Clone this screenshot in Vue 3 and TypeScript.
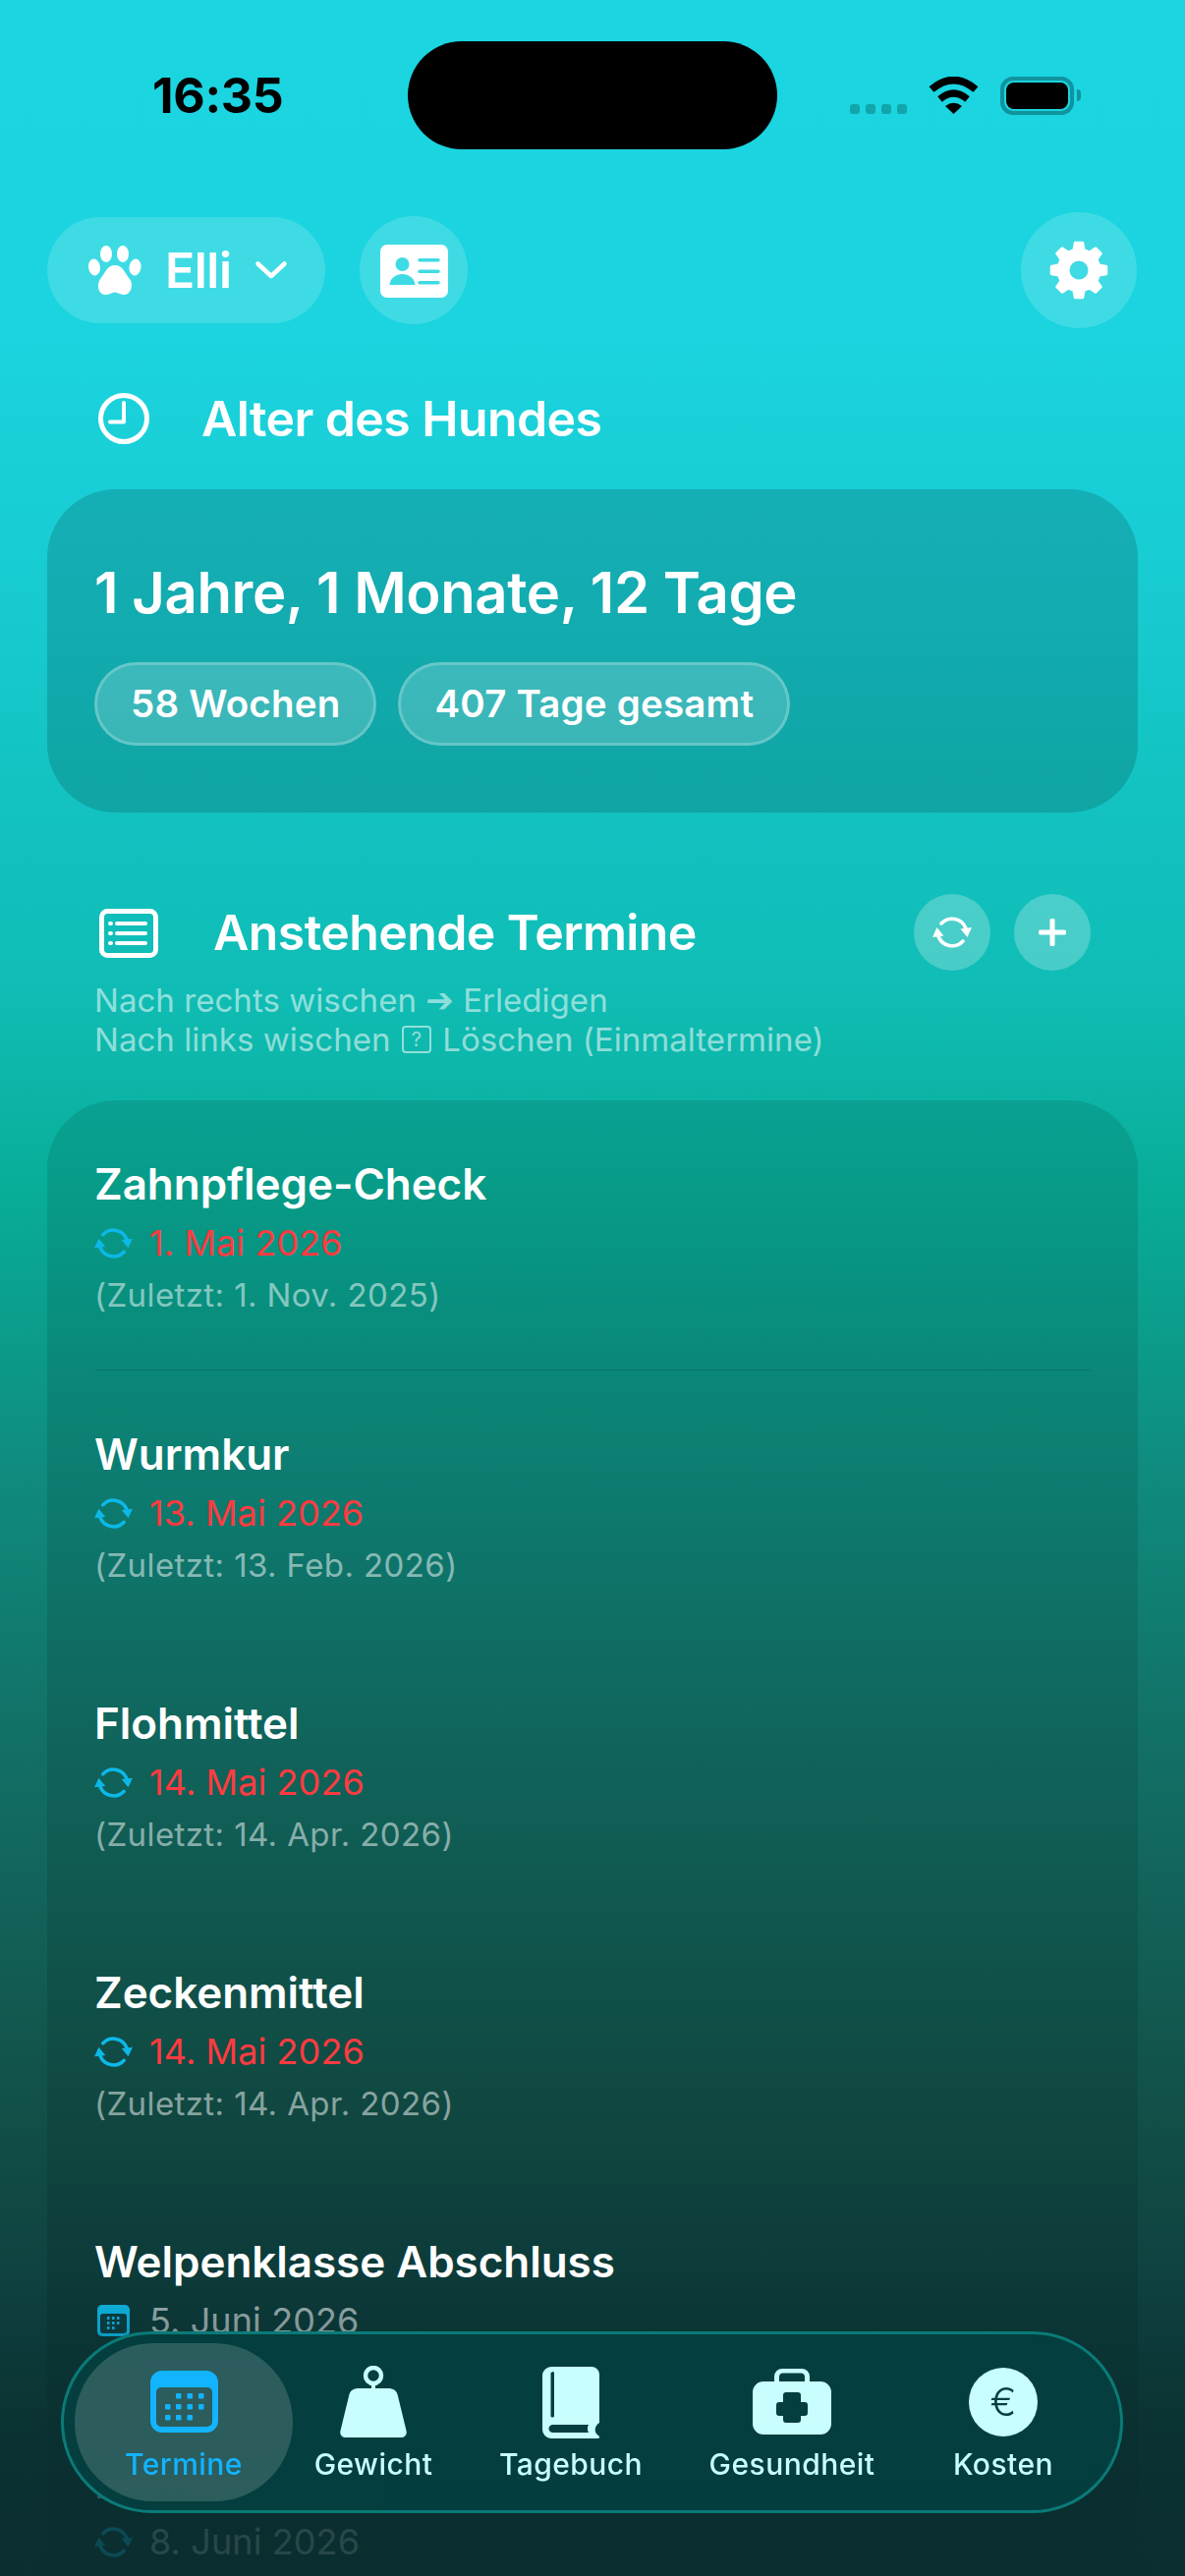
<script setup lang="ts">
interface Termin {
  title: string
  date: string
  last?: string
  kind: 'repeat' | 'calendar'
  overdue: boolean
}

const termine: Termin[] = [
  { title: 'Zahnpflege-Check', date: '1. Mai 2026', last: '(Zuletzt: 1. Nov. 2025)', kind: 'repeat', overdue: true },
  { title: 'Wurmkur', date: '13. Mai 2026', last: '(Zuletzt: 13. Feb. 2026)', kind: 'repeat', overdue: true },
  { title: 'Flohmittel', date: '14. Mai 2026', last: '(Zuletzt: 14. Apr. 2026)', kind: 'repeat', overdue: true },
  { title: 'Zeckenmittel', date: '14. Mai 2026', last: '(Zuletzt: 14. Apr. 2026)', kind: 'repeat', overdue: true },
  { title: 'Welpenklasse Abschluss', date: '5. Juni 2026', kind: 'calendar', overdue: false },
  { title: 'Hundesteuer', date: '8. Juni 2026', kind: 'repeat', overdue: false }
]

function gearPath(): string {
  const cx = 32
  const cy = 32
  const teeth = 8
  const pts: string[] = []
  for (let i = 0; i < teeth; i++) {
    const a = (i * Math.PI * 2) / teeth - Math.PI / 2
    const step = Math.PI / teeth
    const list: Array<[number, number]> = [
      [21, a - step * 0.62],
      [28, a - step * 0.34],
      [28, a + step * 0.34],
      [21, a + step * 0.62]
    ]
    for (const [r, t] of list) {
      pts.push(`${(cx + r * Math.cos(t)).toFixed(2)} ${(cy + r * Math.sin(t)).toFixed(2)}`)
    }
  }
  return `M${pts.join('L')}Z M${cx + 11} ${cy} a11 11 0 1 0 -22 0 a11 11 0 1 0 22 0Z`
}
const gear = gearPath()
</script>

<template>
  <div class="screen">
    <svg class="defs" aria-hidden="true">
      <symbol id="reload" viewBox="0 0 40 34">
        <path d="M9 8A15 15 0 0 1 34 13" fill="none" stroke="currentColor" stroke-width="3.6" stroke-linecap="round" />
        <path d="M31 26A15 15 0 0 1 6 21" fill="none" stroke="currentColor" stroke-width="3.6" stroke-linecap="round" />
        <path d="M28.5 13.5L40 12L35.5 22Z" fill="currentColor" />
        <path d="M11.5 20.5L0 22L4.5 12Z" fill="currentColor" />
      </symbol>
    </svg>

    <header class="status">
      <span class="time">16:35</span>
      <div class="status-right">
        <span class="signal"><i></i><i></i><i></i><i></i></span>
        <svg class="wifi" viewBox="0 0 51 38">
          <path d="M3 13Q25.500 -6 48 13" fill="none" stroke="#000" stroke-width="7.500" />
          <path d="M11.500 23Q25.500 11 39.500 23" fill="none" stroke="#000" stroke-width="7" />
          <path d="M17 30Q25.500 23.500 34 30L25.500 38Z" fill="#000" />
        </svg>
        <span class="battery"><i></i></span>
        <span class="nub"></span>
      </div>
    </header>
    <div class="island"></div>

    <div class="toprow">
      <button class="pill">
        <svg class="paw" viewBox="0 0 54 50" fill="#fff">
          <ellipse cx="6" cy="22" rx="6" ry="8.500" transform="rotate(-8 6 22)" />
          <ellipse cx="18" cy="8.500" rx="6" ry="8.500" />
          <ellipse cx="35" cy="8.500" rx="6" ry="8.500" />
          <ellipse cx="47.500" cy="22" rx="6" ry="8.500" transform="rotate(8 47.500 22)" />
          <path d="M27 20C35 20 37 28 42 34C46 39 44 50 36 50C32 50 30 47.500 27 47.500C24 47.500 22 50 17 50C10 50 8 40 12 34C17 28 19 20 27 20Z" />
        </svg>
        <span class="pet">Elli</span>
        <svg class="chev" viewBox="0 0 34 22"><path d="M3.500 4.500L17 17L30.500 4.500" fill="none" stroke="#fff" stroke-width="4.500" stroke-linecap="round" stroke-linejoin="round" /></svg>
      </button>
      <button class="round idb">
        <svg class="idcard" viewBox="0 0 69 54">
          <path fill="#fff" fill-rule="evenodd" d="M7 0H62a7 7 0 0 1 7 7V47a7 7 0 0 1-7 7H7a7 7 0 0 1-7-7V7a7 7 0 0 1 7-7Z M22.500 13a7 7 0 1 0 0 14a7 7 0 1 0 0-14Z M9.500 41C10 34 16 30 22.500 30C29 30 35 34 35.500 41Z M40 14a1.500 1.500 0 0 0 0 3.500H59a1.500 1.500 0 0 0 0-3.500Z M40 25.500a1.500 1.500 0 0 0 0 3.500H59a1.500 1.500 0 0 0 0-3.500Z M40 37a1.500 1.500 0 0 0 0 3.500H59a1.500 1.500 0 0 0 0-3.500Z" />
        </svg>
      </button>
      <button class="round gearb">
        <svg class="gear" viewBox="0 0 64 64">
          <path :d="gear" fill="#fff" fill-rule="evenodd" stroke="#fff" stroke-width="3" stroke-linejoin="round" />
        </svg>
      </button>
    </div>

    <div class="age-head">
      <svg class="clock" viewBox="0 0 52 52">
        <circle cx="26" cy="26" r="23.500" fill="none" stroke="#fff" stroke-width="5" />
        <path d="M26 10V29.500H12" fill="none" stroke="#fff" stroke-width="4" stroke-linecap="round" stroke-linejoin="round" />
      </svg>
      <h2>Alter des Hundes</h2>
    </div>

    <section class="age-card">
      <div class="age">1 Jahre, 1 Monate, 12 Tage</div>
      <div class="chips">
        <span class="chip">58 Wochen</span>
        <span class="chip">407 Tage gesamt</span>
      </div>
    </section>

    <div class="sec-head">
      <svg class="listicon" viewBox="0 0 60 50">
        <rect x="2.500" y="2.500" width="55" height="45" rx="6" fill="none" stroke="#fff" stroke-width="5" />
        <path d="M18 15H47M18 25H47M18 35H47" stroke="#fff" stroke-width="4" stroke-linecap="round" />
        <path d="M11 15H12M11 25H12M11 35H12" stroke="#fff" stroke-width="4" stroke-linecap="round" />
      </svg>
      <h2>Anstehende Termine</h2>
      <button class="mini">
        <svg class="mini-reload"><use href="#reload" /></svg>
      </button>
      <button class="mini">
        <svg class="plus" viewBox="0 0 28 28"><path d="M14 2V26M2 14H26" stroke="#fff" stroke-width="5" stroke-linecap="round" /></svg>
      </button>
    </div>
    <p class="hint">
      <span class="hline">Nach rechts wischen <span class="arrow">➔</span> Erledigen</span>
      <span class="hline">Nach links wischen <span class="qbox">?</span> Löschen (Einmaltermine)</span>
    </p>

    <section class="list">
      <article v-for="(t, i) in termine" :key="t.title" class="item" :class="{ first: i === 0 }">
        <h3>{{ t.title }}</h3>
        <div class="dateline">
          <svg v-if="t.kind === 'repeat'" class="rep"><use href="#reload" /></svg>
          <svg v-else class="cal" viewBox="0 0 33 32">
            <rect width="33" height="32" rx="5" fill="#0db8e8" />
            <rect x="3" y="9" width="27" height="20" rx="3" fill="#0a3d42" />
            <g fill="#0db8e8">
              <rect x="10" y="12" width="2.500" height="3" /><rect x="15" y="12" width="2.500" height="3" /><rect x="20" y="12" width="2.500" height="3" />
              <rect x="10" y="17" width="2.500" height="3" /><rect x="15" y="17" width="2.500" height="3" /><rect x="20" y="17" width="2.500" height="3" />
              <rect x="10" y="22" width="2.500" height="3" /><rect x="15" y="22" width="2.500" height="3" />
            </g>
          </svg>
          <span class="date" :class="{ overdue: t.overdue }">{{ t.date }}</span>
        </div>
        <div v-if="t.last" class="last">{{ t.last }}</div>
      </article>
    </section>

    <div class="fade"></div>

    <nav class="tabbar">
      <div class="tab active">
        <svg class="ic-cal" viewBox="0 0 69 63">
          <path fill="#12b4ff" fill-rule="evenodd" d="M12 0H57a12 12 0 0 1 12 12V51a12 12 0 0 1-12 12H12A12 12 0 0 1 0 51V12A12 12 0 0 1 12 0Z M11 17a5 5 0 0 0-5 5V52a5 5 0 0 0 5 5H58a5 5 0 0 0 5-5V22a5 5 0 0 0-5-5Z" />
          <g fill="#12b4ff">
            <rect x="26" y="23" width="5.500" height="5.500" rx="1" /><rect x="37.500" y="23" width="5.500" height="5.500" rx="1" /><rect x="49" y="23" width="5.500" height="5.500" rx="1" />
            <rect x="15" y="34" width="5.500" height="5.500" rx="1" /><rect x="26" y="34" width="5.500" height="5.500" rx="1" /><rect x="37.500" y="34" width="5.500" height="5.500" rx="1" /><rect x="49" y="34" width="5.500" height="5.500" rx="1" />
            <rect x="15" y="45" width="5.500" height="5.500" rx="1" /><rect x="26" y="45" width="5.500" height="5.500" rx="1" /><rect x="37.500" y="45" width="5.500" height="5.500" rx="1" />
          </g>
        </svg>
        <span>Termine</span>
      </div>
      <div class="tab">
        <svg class="ic-weight" viewBox="0 0 68 73">
          <circle cx="34" cy="10" r="8" fill="none" stroke="#c8fefe" stroke-width="4.500" />
          <path d="M34 18V24" stroke="#c8fefe" stroke-width="4" />
          <path fill="#c8fefe" d="M19 23H49C54 23 58 25 59 31L67.500 66C68.500 70 66 73 62 73H6C2 73 -0.500 70 0.500 66L9 31C10 25 14 23 19 23Z" />
        </svg>
        <span>Gewicht</span>
      </div>
      <div class="tab">
        <svg class="ic-book" viewBox="0 0 59 73">
          <path fill="#c8fefe" fill-rule="evenodd" d="M9 0H50a8 8 0 0 1 8 8V57C53 60 52 67 57 70C59 71.500 58 73 56 73H9a9 9 0 0 1-9-9V9a9 9 0 0 1 9-9Z M9.500 5.500A1.500 1.500 0 0 0 8.500 7V50A1.500 1.500 0 0 0 10 51.500A1.500 1.500 0 0 0 12 50V7A1.500 1.500 0 0 0 9.500 5.500Z M11 59C5 59 5 67 11 67H47C45.500 64.500 45.500 61.500 47 59Z" />
        </svg>
        <span>Tagebuch</span>
      </div>
      <div class="tab">
        <svg class="ic-med" viewBox="0 0 80 67">
          <path fill="#c8fefe" fill-rule="evenodd" d="M30 0H50a8 8 0 0 1 8 8V13H69a11 11 0 0 1 11 11V56a11 11 0 0 1-11 11H11A11 11 0 0 1 0 56V24a11 11 0 0 1 11-11H22V8a8 8 0 0 1 8-8Z M31 4.500a4 4 0 0 0-4 4V13H53V8.500a4 4 0 0 0-4-4Z M34 24a3 3 0 0 0-3 3V34H27a3 3 0 0 0-3 3V45a3 3 0 0 0 3 3H31V52a3 3 0 0 0 3 3H46a3 3 0 0 0 3-3V48H53a3 3 0 0 0 3-3V37a3 3 0 0 0-3-3H49V27a3 3 0 0 0-3-3Z" />
        </svg>
        <span>Gesundheit</span>
      </div>
      <div class="tab">
        <span class="euro">€</span>
        <span>Kosten</span>
      </div>
    </nav>
  </div>
</template>

<style scoped>
.screen {
  position: relative;
  width: 1206px;
  height: 2622px;
  overflow: hidden;
  font-family: Inter, "Liberation Sans", sans-serif;
  color: #fff;
  background: linear-gradient(180deg, #1bd5e1 0, #1bd4df 330px, #17cbd1 600px, #13c3c2 800px, #10bdb6 1000px, #08ad97 1215px, #0f8b7e 1500px, #127268 1750px, #125048 2150px, #0e3f3f 2350px, #0b2f30 2622px);
}
.defs { position: absolute; width: 0; height: 0; }
button { border: 0; padding: 0; margin: 0; color: inherit; font: inherit; }

.status { height: 216px; flex: none; display: flex; justify-content: space-between; padding: 69px 0 0 155px; box-sizing: border-box; }
.time { font-size: 50px; font-weight: 700; color: #000; line-height: 56px; height: 56px; letter-spacing: -0.3px; }
.status-right { display: flex; align-items: flex-start; padding: 9px 106px 0 0; }
.signal { display: flex; gap: 6px; margin: 28px 22px 0 0; }
.signal i { width: 10px; height: 10px; border-radius: 3px; background: #12a5ac; }
.wifi { width: 51px; height: 38px; margin-right: 22px; }
.battery { width: 75px; height: 39px; box-sizing: border-box; border: 4px solid #0f949e; border-radius: 13px; padding: 2px; display: flex; }
.battery i { flex: 1; background: #000; border-radius: 8px; }
.nub { width: 4px; height: 12px; margin: 13px 0 0 3px; background: #0f949e; border-radius: 0 6px 6px 0; }
.island { position: absolute; left: 415px; top: 42px; width: 376px; height: 110px; background: #000; border-radius: 55px; }

.toprow { display: flex; align-items: center; height: 118px; padding: 0 49px 0 48px; }
.pill { width: 283px; height: 108px; border-radius: 54px; background: rgba(255, 255, 255, 0.16); display: flex; align-items: center; padding-left: 42px; box-sizing: border-box; }
.paw { width: 54px; height: 50px; margin-right: 24px; }
.pet { font-size: 50px; font-weight: 600; line-height: 1; letter-spacing: -0.5px; }
.chev { width: 34px; height: 22px; margin-left: 23px; }
.round { border-radius: 50%; background: rgba(255, 255, 255, 0.16); display: flex; align-items: center; justify-content: center; }
.idb { width: 110px; height: 110px; margin-left: 35px; }
.idcard { width: 69px; height: 54px; margin-top: 2px; }
.gearb { width: 118px; height: 118px; margin-left: auto; }
.gear { width: 64px; height: 64px; }

.age-head { display: flex; align-items: center; height: 52px; margin-top: 66px; padding-left: 100px; }
.clock { width: 52px; height: 52px; margin-right: 53px; }
h2 { margin: 0; font-size: 50px; font-weight: 600; line-height: 60px; letter-spacing: -0.6px; }

.age-card { margin: 46px 48px 0; height: 329px; box-sizing: border-box; border-radius: 70px; padding: 70px 48px 0; background: rgba(0, 0, 0, 0.15); }
.age { font-size: 58px; font-weight: 600; line-height: 70px; letter-spacing: -0.4px; }
.chips { display: flex; gap: 22px; margin-top: 36px; }
.chip { height: 85px; box-sizing: border-box; border: 3px solid rgba(255, 255, 255, 0.22); border-radius: 43px; background: rgba(255, 255, 255, 0.18); font-size: 38.5px; font-weight: 600; line-height: 79px; padding: 0 34px; letter-spacing: 0.2px; }

.sec-head { display: flex; align-items: center; height: 78px; margin-top: 83px; padding: 0 96px 0 101px; }
.listicon { width: 60px; height: 50px; margin: 2px 56px 0 0; }
.sec-head h2 { flex: 1; }
.mini { width: 78px; height: 78px; border-radius: 50%; background: rgba(255, 255, 255, 0.24); display: flex; align-items: center; justify-content: center; margin-left: 24px; }
.mini-reload { width: 40px; height: 34px; color: #fff; }
.plus { width: 28px; height: 28px; }

.hint { margin: 10px 0 0; padding-left: 96px; font-size: 33px; line-height: 40px; color: rgba(255, 255, 255, 0.55); letter-spacing: 0.04px; }
.hline { display: block; height: 40px; white-space: nowrap; }
.arrow { font-family: "DejaVu Sans", sans-serif; font-size: 34px; line-height: 1; }
.qbox { display: inline-block; width: 30px; height: 28px; box-sizing: border-box; border: 2px solid rgba(255, 255, 255, 0.55); border-radius: 4px; font-size: 20px; line-height: 24px; text-align: center; vertical-align: 5px; margin: 0 2px; }

.list { margin: 42px 48px 0; height: 1600px; box-sizing: border-box; padding: 60px 48px 0; border-radius: 70px 70px 0 0; background: rgba(0, 0, 0, 0.1); }
.item { padding-bottom: 53px; margin-bottom: 60px; }
.item.first { border-bottom: 1px solid rgba(0, 60, 60, 0.25); }
h3 { margin: 0; font-size: 44px; font-weight: 600; line-height: 50px; letter-spacing: -0.05px; }
.dateline { display: flex; align-items: center; height: 54px; margin-top: 8px; }
.rep { width: 39px; height: 33px; margin-right: 17px; color: #0db8e8; }
.cal { width: 33px; height: 32px; margin: 0 20px 0 3px; }
.date { font-size: 36px; line-height: 54px; color: rgba(255, 255, 255, 0.6); letter-spacing: 0.1px; }
.date.overdue { color: #ff3b40; }
.last { font-size: 33px; line-height: 46px; margin-top: 3px; color: rgba(255, 255, 255, 0.5); letter-spacing: 0.4px; }

.fade { position: absolute; left: 0; right: 0; bottom: 0; height: 300px; background: linear-gradient(180deg, rgba(11, 47, 48, 0), rgba(11, 47, 48, 0.8) 70%); pointer-events: none; }

.tabbar {
  position: absolute;
  left: 62px;
  top: 2373px;
  width: 1081px;
  height: 185px;
  box-sizing: border-box;
  border: 3px solid #0a7b78;
  border-radius: 93px;
  padding: 9px 11px;
  display: grid;
  grid-template-columns: 222px 164px 238px 212px 218px;
  background: rgba(4, 62, 62, 0.96);
  backdrop-filter: blur(14px);
}
.tab { position: relative; display: flex; flex-direction: column; align-items: center; border-radius: 80px; font-size: 30px; font-weight: 500; letter-spacing: 0.45px; color: #c8fefe; height: 161px; }
.tab span:last-child { position: absolute; top: 104px; line-height: 38px; white-space: nowrap; }
.tab svg, .tab .euro { position: absolute; }
.tab.active { background: rgba(255, 255, 255, 0.16); color: #12b4ff; }
.ic-cal { top: 28px; width: 69px; height: 63px; }
.ic-weight { top: 23px; width: 68px; height: 73px; }
.ic-book { top: 24px; width: 59px; height: 73px; }
.ic-med { top: 26px; width: 80px; height: 67px; }
.euro { top: 25px; width: 70px; height: 70px; border-radius: 50%; background: #c8fefe; color: #053f3f; font-size: 40px; font-weight: 300; line-height: 70px; text-align: center; letter-spacing: 0; }
</style>

<style>
html, body { margin: 0; padding: 0; }
</style>
